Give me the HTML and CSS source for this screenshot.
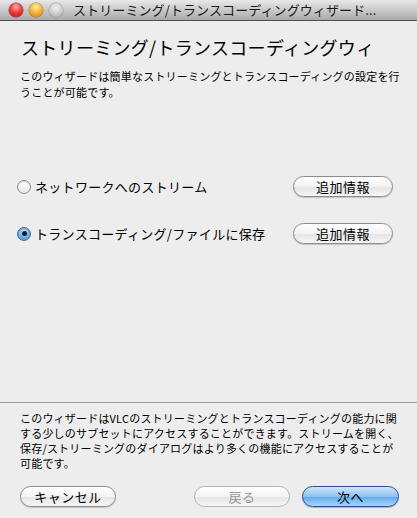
FILE: index.html
```html
<!DOCTYPE html>
<html lang="ja">
<head>
<meta charset="utf-8">
<link rel="stylesheet" href="styles.css">
</head>
<body>
<div class="window">
  <div class="titlebar">
    <div class="lights">
      <span class="light red"></span>
      <span class="light orange"></span>
      <span class="light gray"></span>
    </div>
    <div class="title">ストリーミング/トランスコーディングウィザード...</div>
  </div>
  <div class="content">
    <h1 class="heading">ストリーミング/トランスコーディングウィ</h1>
    <p class="desc">このウィザードは簡単なストリーミングとトランスコーディングの設定を行<br>うことが可能です。</p>
    <div class="options">
      <div class="option">
        <label class="radio-label"><span class="radio"></span>ネットワークへのストリーム</label>
        <button class="btn info">追加情報</button>
      </div>
      <div class="option">
        <label class="radio-label"><span class="radio checked"></span>トランスコーディング/ファイルに保存</label>
        <button class="btn info">追加情報</button>
      </div>
    </div>
  </div>
  <div class="footer">
    <p class="note">このウィザードはVLCのストリーミングとトランスコーディングの能力に関<br>する少しのサブセットにアクセスすることができます。ストリームを開く、<br>保存/ストリーミングのダイアログはより多くの機能にアクセスすることが<br>可能です。</p>
    <div class="actions">
      <button class="btn cancel">キャンセル</button>
      <div class="right">
        <button class="btn disabled">戻る</button>
        <button class="btn primary">次へ</button>
      </div>
    </div>
  </div>
</div>
</body>
</html>
```
FILE: styles.css
```css
* { box-sizing: border-box; }
html, body { margin: 0; padding: 0; }
body {
  font-family: "Noto Sans CJK JP", "DejaVu Sans", sans-serif;
  color: #000;
  background: #ededed;
}
.window {
  width: 417px;
  height: 518px;
  display: flex;
  flex-direction: column;
  background: #ededed;
  overflow: hidden;
}
.titlebar {
  height: 21px;
  flex: none;
  display: flex;
  align-items: center;
  background: linear-gradient(#e9e9e9, #c9c9c9 50%, #a9a9a9);
  border-bottom: 1px solid #515151;
}
.lights {
  display: flex;
  gap: 6px;
  padding-left: 9px;
}
.light {
  width: 14px;
  height: 14px;
  border-radius: 50%;
  display: block;
}
.light.red {
  background: radial-gradient(circle at 50% 30%, #ffb3b3 0, #f23a3a 45%, #b90b0b 100%);
  box-shadow: 0 0 0 0.5px #8a1a1a;
}
.light.orange {
  background: radial-gradient(circle at 50% 30%, #fff0b0 0, #f7b53a 45%, #d47a0a 100%);
  box-shadow: 0 0 0 0.5px #9a6a1a;
}
.light.gray {
  background: radial-gradient(circle at 50% 35%, #f2f2f2 0, #cfcfcf 50%, #a8a8a8 100%);
  box-shadow: 0 0 0 0.5px #8c8c8c;
}
.title {
  margin-left: 10px;
  font-size: 13px;
  line-height: 20px;
  color: #1a1a1a;
  white-space: nowrap;
  letter-spacing: 0.1px;
}
.content {
  padding: 14px 22px 0 21px;
  flex: 1;
}
.heading {
  margin: 0;
  font-size: 18px;
  font-weight: normal;
  line-height: 24px;
  white-space: nowrap;
  letter-spacing: 0.3px;
}
.desc {
  margin: 9px 0 0 -1px;
  font-size: 11px;
  line-height: 16px;
  letter-spacing: 0.2px;
  white-space: nowrap;
}
.options {
  margin-top: 76px;
  display: flex;
  flex-direction: column;
  gap: 26px;
}
.option {
  display: flex;
  align-items: center;
  justify-content: space-between;
  height: 21px;
}
.radio-label {
  display: flex;
  align-items: center;
  font-size: 13px;
  line-height: 20px;
  letter-spacing: 0.3px;
}
.radio {
  width: 14px;
  height: 14px;
  border-radius: 50%;
  margin-right: 4px;
  margin-left: -4px;
  border: 1px solid #8a8a8a;
  background: linear-gradient(#fdfdfd, #e8e8e8);
  box-shadow: inset 0 1px 1px rgba(0,0,0,0.15);
  position: relative;
}
.radio.checked {
  border-color: #3d6ea6;
  background: radial-gradient(circle at 50% 30%, #c9e3fb 0, #7db6ec 45%, #3f88d8 100%);
}
.radio.checked::after {
  content: "";
  position: absolute;
  width: 5px;
  height: 5px;
  border-radius: 50%;
  background: #1a1a1a;
  left: 3.5px;
  top: 3.5px;
}
.btn {
  font-family: inherit;
  font-size: 13px;
  line-height: 18px;
  height: 21px;
  padding: 0;
  border-radius: 11px;
  border: 1px solid #8c8c8c;
  background: linear-gradient(#ffffff, #f3f3f3 50%, #e4e4e4 51%, #f6f6f6);
  box-shadow: 0 1px 1px rgba(0,0,0,0.18);
  color: #000;
  letter-spacing: 0.5px;
}
.btn.info {
  width: 100px;
  margin-right: 2px;
}
.footer {
  flex: none;
  height: 116px;
  border-top: 1px solid #9b9b9b;
  padding: 8px 20px 11px 20px;
}
.note {
  margin: 0;
  font-size: 11px;
  line-height: 15px;
  letter-spacing: 0.2px;
  white-space: nowrap;
}
.actions {
  margin-top: 15px;
  display: flex;
  justify-content: space-between;
  align-items: center;
}
.right {
  display: flex;
  gap: 12px;
  margin-right: -2px;
}
.btn.cancel { width: 96px; }
.btn.disabled {
  width: 96px;
  color: #9a9a9a;
  border-color: #b5b5b5;
  box-shadow: none;
}
.btn.primary {
  width: 97px;
  border-color: #2b4f92;
  background: linear-gradient(#cfe6fb, #8dc2f1 50%, #63a8ec 51%, #a4d7fb);
  box-shadow: 0 1px 1px rgba(0,0,0,0.25);
}
```
